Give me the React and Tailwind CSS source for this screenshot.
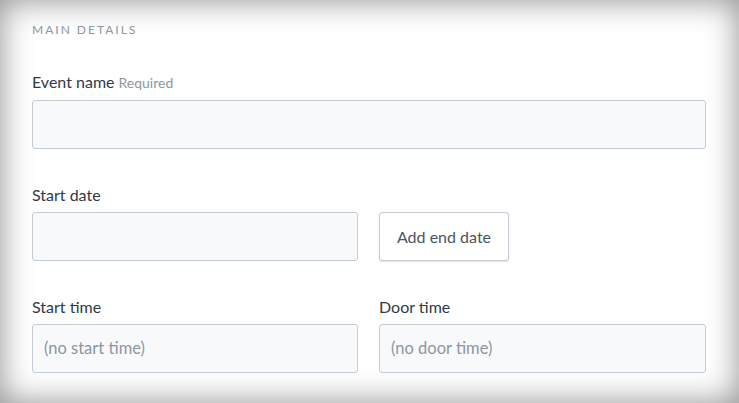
export default function App() {
  const font = { fontFamily: "Lato, 'Open Sans', sans-serif" };
  return (
    <div
      className="w-[739px] h-[403px] bg-white overflow-hidden shadow-[inset_0_0_32px_rgba(0,0,0,0.45)]"
      style={font}
    >
      <div className="px-[32px] pt-[22px]">
        <div className="text-[12px] leading-[16px] tracking-[2px] text-[#8c97a3]">MAIN DETAILS</div>

        <div className="mt-[34px] flex items-baseline gap-[4px]">
          <span className="text-[16px] leading-[20px] text-[#2f3a45]">Event name</span>
          <span className="text-[14px] leading-[20px] text-[#8c97a3]">Required</span>
        </div>
        <div className="mt-[7px] h-[49px] w-[674px] rounded-[3px] border border-[#c5ccd4] bg-[#f8f9fb]" />

        <div className="mt-[36px] text-[16px] leading-[20px] text-[#2f3a45]">Start date</div>
        <div className="mt-[7px] flex gap-[21px]">
          <div className="h-[49px] w-[326px] rounded-[3px] border border-[#c5ccd4] bg-[#f8f9fb]" />
          <button className="h-[49px] w-[130px] rounded-[3px] border border-[#c5ccd4] bg-white text-[16px] text-[#4a5562] shadow-[0_1px_2px_rgba(0,0,0,0.12)]">
            Add end date
          </button>
        </div>

        <div className="mt-[36px] flex gap-[21px]">
          <div className="w-[326px]">
            <div className="text-[16px] leading-[20px] text-[#2f3a45]">Start time</div>
            <div className="mt-[7px] flex h-[49px] items-center rounded-[3px] border border-[#c5ccd4] bg-[#f8f9fb] pl-[11px] text-[16.5px] text-[#8c97a3]">
              (no start time)
            </div>
          </div>
          <div className="w-[327px]">
            <div className="text-[16px] leading-[20px] text-[#2f3a45]">Door time</div>
            <div className="mt-[7px] flex h-[49px] items-center rounded-[3px] border border-[#c5ccd4] bg-[#f8f9fb] pl-[11px] text-[16.5px] text-[#8c97a3]">
              (no door time)
            </div>
          </div>
        </div>
      </div>
    </div>
  );
}
